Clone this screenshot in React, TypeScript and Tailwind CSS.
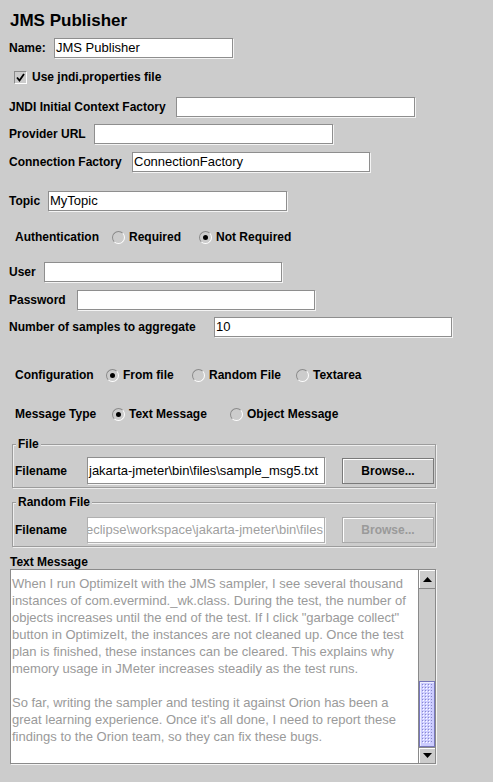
import React from 'react';

const fieldClass =
  'h-[20px] bg-white border border-[#8e8e8e] shadow-[1px_1px_0_#f4f4f4] px-[1px] flex items-center text-[13px] text-black whitespace-nowrap overflow-hidden';

function TextRow({ label, labelW, inputW, value = '', mt }: { label: string; labelW: number; inputW: number; value?: string; mt: string }) {
  return (
    <div className={`flex items-center h-[20px] pl-[9px] ${mt}`}>
      <span className="text-[12px] font-bold shrink-0 whitespace-nowrap" style={{ width: labelW }}>
        {label}
      </span>
      <div className={fieldClass} style={{ width: inputW }}>
        {value}
      </div>
    </div>
  );
}

function Radio({ checked, label, width }: { checked?: boolean; label: string; width?: number }) {
  return (
    <div className="flex items-center gap-[4px] shrink-0" style={width ? { width } : undefined}>
      <span className="w-[13px] h-[13px] rounded-full border border-[#8a8a8a] border-r-white border-b-white bg-[#cccccc] flex items-center justify-center">
        {checked && <span className="w-[5px] h-[5px] rounded-full bg-black" />}
      </span>
      <span className="text-[12px] font-bold whitespace-nowrap">{label}</span>
    </div>
  );
}

function BrowseButton({ disabled }: { disabled?: boolean }) {
  return (
    <div
      className={`w-[92px] h-[26px] flex items-center justify-center text-[12px] font-bold border shadow-[inset_1px_1px_0_#ffffff] ${
        disabled ? 'border-[#aaaaaa] text-[#9a9a9a]' : 'border-[#7a7a7a] text-black'
      }`}
    >
      Browse...
    </div>
  );
}

function Panel({ title, children, mt }: { title: string; children: React.ReactNode; mt: string }) {
  return (
    <div className={`relative ml-[12px] w-[424px] border border-[#9c9c9c] shadow-[inset_1px_1px_0_#eeeeee,1px_1px_0_#eeeeee] ${mt}`}>
      <span className="absolute left-[3px] top-[-8px] px-[2px] bg-[#cccccc] text-[12px] font-bold leading-[14px]">{title}</span>
      {children}
    </div>
  );
}

const messageLines = [
  'When I run OptimizeIt with the JMS sampler, I see several thousand',
  'instances of com.evermind._wk.class. During the test, the number of',
  'objects increases until the end of the test. If I click "garbage collect"',
  'button in OptimizeIt, the instances are not cleaned up. Once the test',
  'plan is finished, these instances can be cleared. This explains why',
  'memory usage in JMeter increases steadily as the test runs.',
  '',
  'So far, writing the sampler and testing it against Orion has been a',
  "great learning experience. Once it's all done, I need to report these",
  'findings to the Orion team, so they can fix these bugs.',
];

export default function App() {
  return (
    <div className="w-[493px] h-[782px] bg-[#cccccc] text-black font-['Liberation_Sans',Arial,sans-serif] overflow-hidden flex flex-col">
      {/* Title */}
      <div className="mt-[12px] h-[18px] leading-[18px] pl-[10px] text-[17px] font-bold">JMS Publisher</div>

      <TextRow label="Name:" labelW={45} inputW={179} value="JMS Publisher" mt="mt-[8px]" />

      {/* Checkbox */}
      <div className="mt-[12px] h-[14px] pl-[14px] flex items-center gap-[5px]">
        <span className="w-[13px] h-[13px] border border-[#8a8a8a] border-r-white border-b-white bg-[#cccccc] flex items-center justify-center">
          <svg width="9" height="9" viewBox="0 0 9 9">
            <path d="M1 4.5 L3.5 7.5 L8 1" stroke="#000" strokeWidth="1.8" fill="none" />
          </svg>
        </span>
        <span className="text-[12px] font-bold">Use jndi.properties file</span>
      </div>

      <TextRow label="JNDI Initial Context Factory" labelW={167} inputW={239} mt="mt-[13px]" />
      <TextRow label="Provider URL" labelW={85} inputW={239} mt="mt-[7px]" />
      <TextRow label="Connection Factory" labelW={123} inputW={238} value="ConnectionFactory" mt="mt-[8px]" />
      <TextRow label="Topic" labelW={39} inputW={239} value="MyTopic" mt="mt-[19px]" />

      {/* Authentication */}
      <div className="mt-[19px] h-[14px] pl-[15px] flex items-center">
        <span className="w-[97px] text-[12px] font-bold">Authentication</span>
        <Radio label="Required" width={87} />
        <Radio label="Not Required" checked />
      </div>

      <TextRow label="User" labelW={35} inputW={238} mt="mt-[18px]" />
      <TextRow label="Password" labelW={68} inputW={238} mt="mt-[8px]" />
      <TextRow label="Number of samples to aggregate" labelW={205} inputW={238} value="10" mt="mt-[7px]" />

      {/* Configuration */}
      <div className="mt-[31px] h-[14px] pl-[15px] flex items-center">
        <span className="w-[91px] text-[12px] font-bold">Configuration</span>
        <Radio label="From file" checked width={86} />
        <Radio label="Random File" width={104} />
        <Radio label="Textarea" />
      </div>

      {/* Message type */}
      <div className="mt-[25px] h-[14px] pl-[15px] flex items-center">
        <span className="w-[97px] text-[12px] font-bold">Message Type</span>
        <Radio label="Text Message" checked width={118} />
        <Radio label="Object Message" />
      </div>

      <Panel title="File" mt="mt-[23px]">
        <div className="flex items-center pl-[2px] pt-[12px] pb-[3px]">
          <span className="w-[72px] text-[12px] font-bold">Filename</span>
          <div className={`${fieldClass} h-[27px] w-[238px]`}>jakarta-jmeter\bin\files\sample_msg5.txt</div>
          <div className="ml-[17px]">
            <BrowseButton />
          </div>
        </div>
      </Panel>

      <Panel title="Random File" mt="mt-[14px]">
        <div className="flex items-center pl-[2px] pt-[14px] pb-[3px]">
          <span className="w-[72px] text-[12px] font-bold">Filename</span>
          <div className="h-[26px] w-[238px] bg-white border border-[#b0b0b0] shadow-[1px_1px_0_#f4f4f4] px-[1px] flex items-center justify-end text-[13px] text-[#a0a0a0] whitespace-nowrap overflow-hidden">
            <span className="shrink-0">C:\eclipse\workspace\jakarta-jmeter\bin\files</span>
          </div>
          <div className="ml-[17px]">
            <BrowseButton disabled />
          </div>
        </div>
      </Panel>

      <div className="mt-[8px] h-[14px] leading-[14px] pl-[10px] text-[12px] font-bold">Text Message</div>

      {/* Text area */}
      <div className="ml-[10px] w-[426px] h-[195px] border border-[#8a8a8a] shadow-[1px_1px_0_#f4f4f4] bg-white flex">
        <div className="flex-1 overflow-hidden pl-[1px] pt-[5px] text-[13px] leading-[17px] text-[#9a9a9a]">
          {messageLines.map((line, i) => (
            <div key={i} className="h-[17px] whitespace-nowrap">
              {line}
            </div>
          ))}
        </div>
        {/* Scrollbar */}
        <div className="w-[17px] bg-[#cccccc] border-l border-[#8a8a8a] flex flex-col">
          <div className="h-[19px] border-b border-[#8a8a8a] shadow-[inset_1px_1px_0_#ffffff] flex items-center justify-center">
            <svg width="9" height="5" viewBox="0 0 9 5">
              <path d="M0 5 L4.5 0 L9 5 Z" fill="#000" />
            </svg>
          </div>
          <div className="flex-1 flex flex-col justify-end">
            <div className="h-[66px] bg-[#ccccff] border border-[#7777bb] shadow-[inset_1px_1px_0_#eeeeff] p-[2px]">
              <svg width="100%" height="100%">
                <defs>
                  <pattern id="bumps" width="3" height="3" patternUnits="userSpaceOnUse">
                    <rect x="0" y="0" width="1" height="1" fill="#8888cc" />
                    <rect x="1" y="1" width="1" height="1" fill="#ffffff" />
                  </pattern>
                </defs>
                <rect width="100%" height="100%" fill="url(#bumps)" />
              </svg>
            </div>
          </div>
          <div className="h-[16px] border-t border-[#8a8a8a] shadow-[inset_1px_1px_0_#ffffff] flex items-center justify-center">
            <svg width="9" height="5" viewBox="0 0 9 5">
              <path d="M0 0 L9 0 L4.5 5 Z" fill="#000" />
            </svg>
          </div>
        </div>
      </div>
    </div>
  );
}
